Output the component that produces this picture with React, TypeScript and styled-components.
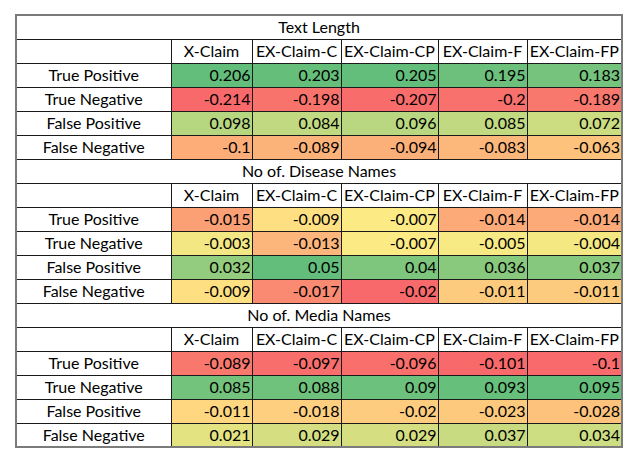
import React from 'react';
import styled, { createGlobalStyle } from 'styled-components';

type Row = { label: string; values: number[] };
type Section = { title: string; rows: Row[] };

const COLUMNS = ['X-Claim', 'EX-Claim-C', 'EX-Claim-CP', 'EX-Claim-F', 'EX-Claim-FP'];
const WIDTHS = [155, 81, 89, 97, 89, 95];

const SECTIONS: Section[] = [
	{
		title: 'Text Length',
		rows: [
			{ label: 'True Positive', values: [0.206, 0.203, 0.205, 0.195, 0.183] },
			{ label: 'True Negative', values: [-0.214, -0.198, -0.207, -0.2, -0.189] },
			{ label: 'False Positive', values: [0.098, 0.084, 0.096, 0.085, 0.072] },
			{ label: 'False Negative', values: [-0.1, -0.089, -0.094, -0.083, -0.063] },
		],
	},
	{
		title: 'No of. Disease Names',
		rows: [
			{ label: 'True Positive', values: [-0.015, -0.009, -0.007, -0.014, -0.014] },
			{ label: 'True Negative', values: [-0.003, -0.013, -0.007, -0.005, -0.004] },
			{ label: 'False Positive', values: [0.032, 0.05, 0.04, 0.036, 0.037] },
			{ label: 'False Negative', values: [-0.009, -0.017, -0.02, -0.011, -0.011] },
		],
	},
	{
		title: 'No of. Media Names',
		rows: [
			{ label: 'True Positive', values: [-0.089, -0.097, -0.096, -0.101, -0.1] },
			{ label: 'True Negative', values: [0.085, 0.088, 0.09, 0.093, 0.095] },
			{ label: 'False Positive', values: [-0.011, -0.018, -0.02, -0.023, -0.028] },
			{ label: 'False Negative', values: [0.021, 0.029, 0.029, 0.037, 0.034] },
		],
	},
];

// excel style 3 colour scale: min red, 50th percentile yellow, max green
const RED = [248, 105, 107];
const YELLOW = [255, 235, 132];
const GREEN = [99, 190, 123];

const mix = (a: number[], b: number[], t: number) =>
	`rgb(${a.map((c, i) => Math.round(c + (b[i] - c) * t)).join(',')})`;

function makeScale(all: number[]) {
	const sorted = [...all].sort((a, b) => a - b);
	const min = sorted[0];
	const max = sorted[sorted.length - 1];
	const n = sorted.length;
	const mid = n % 2 ? sorted[(n - 1) / 2] : (sorted[n / 2 - 1] + sorted[n / 2]) / 2;
	return (v: number) => {
		if (v <= mid) return mix(RED, YELLOW, (v - min) / (mid - min || 1));
		return mix(YELLOW, GREEN, (v - mid) / (max - mid || 1));
	};
}

const GlobalStyle = createGlobalStyle`
	body {
		margin: 0;
		background: #ffffff;
		font-family: Lato, "Liberation Sans", sans-serif;
	}
`;

const Page = styled.div`
	padding: 14px 0 0 15px;
`;

const Table = styled.table`
	border-collapse: collapse;
	table-layout: fixed;
	width: 607px;
	border: 2px solid #7b7b7b;
	font-size: 16px;
	color: #000;
`;

const Tr = styled.tr`
	height: 24px;
`;

const Cell = styled.td`
	border: 1px solid #1a1a1a;
	padding: 0 1px;
	white-space: nowrap;
	overflow: hidden;
	line-height: 22px;
`;

const TitleCell = styled(Cell)`
	text-align: center;
`;

const HeadCell = styled(Cell)`
	text-align: center;
`;

const LabelCell = styled(Cell)`
	text-align: center;
`;

const ValueCell = styled(Cell)<{ $bg: string }>`
	text-align: right;
	background: ${(p) => p.$bg};
`;

function Block({ section }: { section: Section }) {
	const color = makeScale(section.rows.flatMap((r) => r.values));
	return (
		<>
			<Tr>
				<TitleCell colSpan={6}>{section.title}</TitleCell>
			</Tr>
			<Tr>
				<HeadCell />
				{COLUMNS.map((c) => (
					<HeadCell key={c}>{c}</HeadCell>
				))}
			</Tr>
			{section.rows.map((row) => (
				<Tr key={row.label}>
					<LabelCell>{row.label}</LabelCell>
					{row.values.map((v, i) => (
						<ValueCell key={i} $bg={color(v)}>
							{v}
						</ValueCell>
					))}
				</Tr>
			))}
		</>
	);
}

export default function App() {
	return (
		<Page>
			<GlobalStyle />
			<Table>
				<colgroup>
					{WIDTHS.map((w, i) => (
						<col key={i} style={{ width: w }} />
					))}
				</colgroup>
				<tbody>
					{SECTIONS.map((s) => (
						<Block key={s.title} section={s} />
					))}
				</tbody>
			</Table>
		</Page>
	);
}
